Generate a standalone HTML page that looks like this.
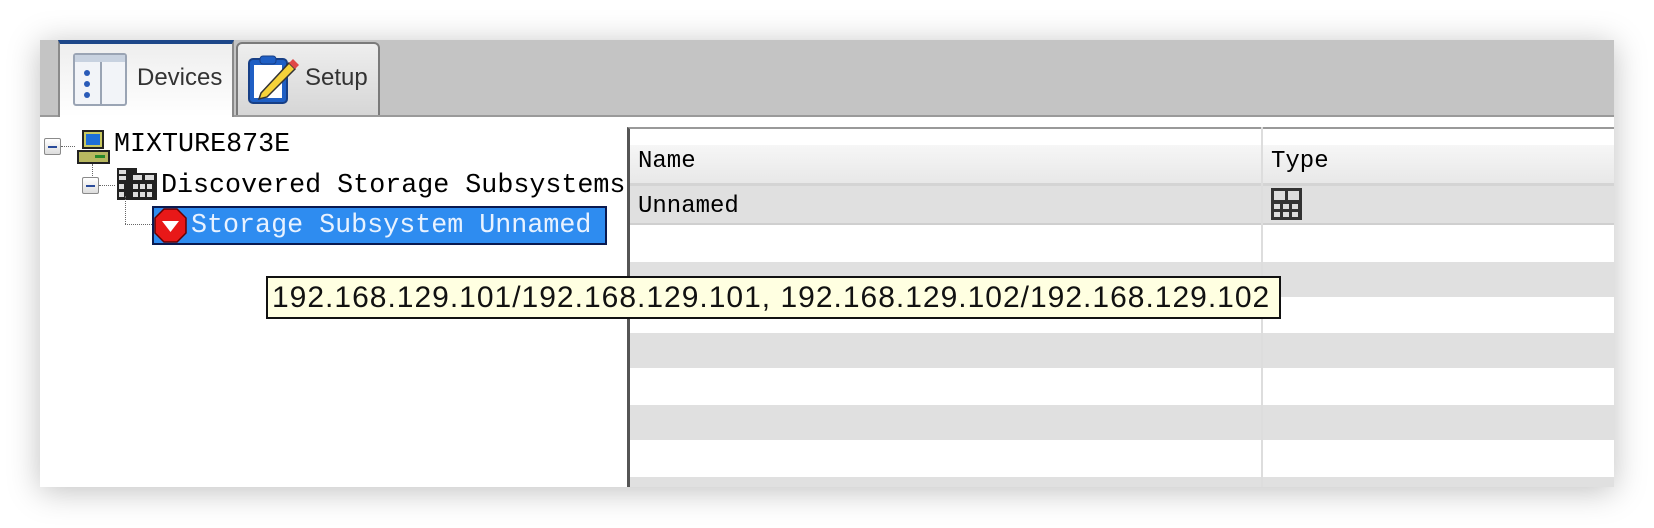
<!DOCTYPE html>
<html><head><style>
body{margin:0;width:1654px;height:528px;background:#fff;position:relative;overflow:hidden;font-family:"Liberation Sans",sans-serif}
.abs{position:absolute}
#win{left:40px;top:40px;width:1574px;height:447px;background:#fff;box-shadow:0 4px 30px rgba(0,0,0,.25);overflow:hidden}
.mono{font-family:"Liberation Mono",monospace;font-size:26.7px;white-space:nowrap;line-height:30px}
.mb{width:17px;height:17px;border:1px solid #8a8a8a;background:linear-gradient(#fff,#ddd);box-sizing:border-box;border-radius:2px}
.mb:after{content:"";position:absolute;left:3px;top:7px;width:9px;height:2px;background:#2a4b9a}
</style></head><body>
<div id="win" class="abs">
  <div class="abs" style="left:0;top:0;width:1574px;height:75px;background:#c4c4c4;border-bottom:2px solid #9a9a9a"></div>
  <div class="abs" style="left:196px;top:2px;width:144px;height:73px;background:linear-gradient(#eee,#d6d6d6);border:2px solid #7a7a7a;border-bottom:none;border-radius:6px 6px 0 0;box-sizing:border-box"></div>
  <div class="abs" style="left:18px;top:0;width:176px;height:77px;background:linear-gradient(#eee,#fff);border-left:2px solid #8a8a8a;border-right:2px solid #8a8a8a;border-top:4px solid #1d4789;box-sizing:border-box"></div>
  <svg class="abs" style="left:33px;top:13px" width="54" height="53" viewBox="0 0 54 53">
    <rect x="1" y="1" width="52" height="51" rx="2" fill="#f2f4f8" stroke="#9aa4b4" stroke-width="2"/>
    <rect x="2" y="2" width="50" height="7" fill="#c8d2e0"/>
    <line x1="28" y1="9" x2="28" y2="51" stroke="#9aa4b4" stroke-width="2"/>
    <circle cx="14" cy="20" r="3" fill="#2a5bb8"/><circle cx="14" cy="31" r="3" fill="#2a5bb8"/><circle cx="14" cy="42" r="3" fill="#2a5bb8"/>
  </svg>
  <div class="abs" style="left:97px;top:24px;font-size:24px;color:#333">Devices</div>
  <svg class="abs" style="left:207px;top:13px" width="52" height="52" viewBox="0 0 52 52">
    <rect x="2" y="6" width="38" height="44" rx="4" fill="#1f5fc4" stroke="#173f86" stroke-width="2"/>
    <rect x="7" y="12" width="28" height="33" fill="#fff"/>
    <rect x="13" y="3" width="16" height="8" rx="3" fill="#1f5fc4" stroke="#173f86"/>
    <path d="M14 40 L42 10 L48 16 L20 44 L12 46 Z" fill="#f5d23a" stroke="#333" stroke-width="1.5"/>
    <path d="M42 10 L46 6 L52 12 L48 16 Z" fill="#e04848"/>
  </svg>
  <div class="abs" style="left:265px;top:24px;font-size:24px;color:#333">Setup</div>

  <div class="abs mb" style="left:4px;top:98px"></div>
  <div class="abs" style="left:21px;top:106px;width:14px;border-top:1px dotted #666"></div>
  <svg class="abs" style="left:37px;top:90px" width="33" height="34" viewBox="0 0 33 34">
    <rect x="6" y="1" width="20" height="17" fill="#c8c860" stroke="#222" stroke-width="2"/>
    <rect x="9" y="4" width="14" height="11" fill="#1e6fd8"/>
    <rect x="1" y="21" width="31" height="12" fill="#b8b860" stroke="#222" stroke-width="2"/>
    <rect x="18" y="25" width="10" height="3" fill="#2a8a2a"/>
  </svg>
  <div class="abs mono" style="left:74px;top:90px">MIXTURE873E</div>
  <div class="abs" style="left:52px;top:124px;height:12px;border-left:1px dotted #666"></div>
  <div class="abs mb" style="left:42px;top:137px"></div>
  <div class="abs" style="left:59px;top:145px;width:16px;border-top:1px dotted #666"></div>
  <svg class="abs" style="left:76px;top:127px" width="42" height="34" viewBox="0 0 42 34">
    <rect x="1" y="1" width="20" height="32" fill="#222"/>
    <rect x="14" y="6" width="27" height="27" fill="#222"/>
    <g fill="#ddd"><rect x="3" y="3" width="7" height="4"/><rect x="3" y="9" width="7" height="4"/><rect x="17" y="8" width="9" height="5"/><rect x="29" y="8" width="9" height="5"/>
    <rect x="3" y="17" width="5" height="5"/><rect x="3" y="25" width="5" height="5"/><rect x="17" y="17" width="5" height="5"/><rect x="24" y="17" width="5" height="5"/><rect x="31" y="17" width="5" height="5"/><rect x="17" y="25" width="5" height="5"/><rect x="24" y="25" width="5" height="5"/><rect x="31" y="25" width="5" height="5"/></g>
  </svg>
  <div class="abs mono" style="left:121px;top:131px">Discovered Storage Subsystems</div>
  <div class="abs" style="left:85px;top:156px;height:28px;border-left:1px dotted #666"></div>
  <div class="abs" style="left:85px;top:184px;width:27px;border-top:1px dotted #666"></div>
  <div class="abs" style="left:112px;top:166px;width:455px;height:39px;background:#2e8cf0;border:2px solid #0a1a50;box-sizing:border-box"></div>
  <svg class="abs" style="left:114px;top:168px" width="33" height="35" viewBox="0 0 33 35">
    <polygon points="10,1 23,1 32,10 32,25 23,34 10,34 1,25 1,10" fill="#e81818" stroke="#600" stroke-width="1.5"/>
    <polygon points="8,13 25,13 16.5,24" fill="#fff"/>
  </svg>
  <div class="abs mono" style="left:151px;top:171px;color:#e8f2ff">Storage Subsystem Unnamed</div>

  <div class="abs" style="left:587px;top:87px;width:990px;height:360px;border-left:3px solid #555;border-top:2px solid #999;background:#fff"></div>
  <div class="abs" style="left:590px;top:105px;width:990px;height:38px;background:linear-gradient(#f6f6f6,#e8e8e8);border-bottom:3px solid #d4d4d4"></div>
  <div class="abs" style="left:590px;top:146px;width:990px;height:37px;background:#e0e0e0;border-bottom:2px solid #cfcfcf"></div>
  <div class="abs" style="left:590px;top:222px;width:990px;height:35px;background:#e0e0e0"></div>
  <div class="abs" style="left:590px;top:293px;width:990px;height:35px;background:#e0e0e0"></div>
  <div class="abs" style="left:590px;top:365px;width:990px;height:35px;background:#e0e0e0"></div>
  <div class="abs" style="left:590px;top:437px;width:990px;height:20px;background:#e0e0e0"></div>
  <div class="abs" style="left:1221px;top:87px;height:360px;border-left:2px solid #ddd"></div>
  <div class="abs mono" style="left:598px;top:107px;font-size:24px">Name</div>
  <div class="abs mono" style="left:1231px;top:107px;font-size:24px">Type</div>
  <div class="abs mono" style="left:598px;top:152px;font-size:24px">Unnamed</div>
  <svg class="abs" style="left:1231px;top:148px" width="31" height="32" viewBox="0 0 31 32">
    <rect x="0" y="0" width="31" height="32" fill="#333"/>
    <g fill="#ddd"><rect x="3" y="3" width="11" height="9"/><rect x="17" y="3" width="11" height="9"/>
    <rect x="3" y="16" width="6" height="5"/><rect x="12" y="16" width="6" height="5"/><rect x="21" y="16" width="6" height="5"/>
    <rect x="3" y="24" width="6" height="5"/><rect x="12" y="24" width="6" height="5"/><rect x="21" y="24" width="6" height="5"/></g>
  </svg>

  <div class="abs" style="left:226px;top:236px;width:1015px;height:43px;background:#ffffe1;border:2px solid #111;box-sizing:border-box;font-size:30px;line-height:39px;padding-left:4px;white-space:nowrap;letter-spacing:1px;color:#111">192.168.129.101/192.168.129.101, 192.168.129.102/192.168.129.102</div>
</div>
</body></html>
